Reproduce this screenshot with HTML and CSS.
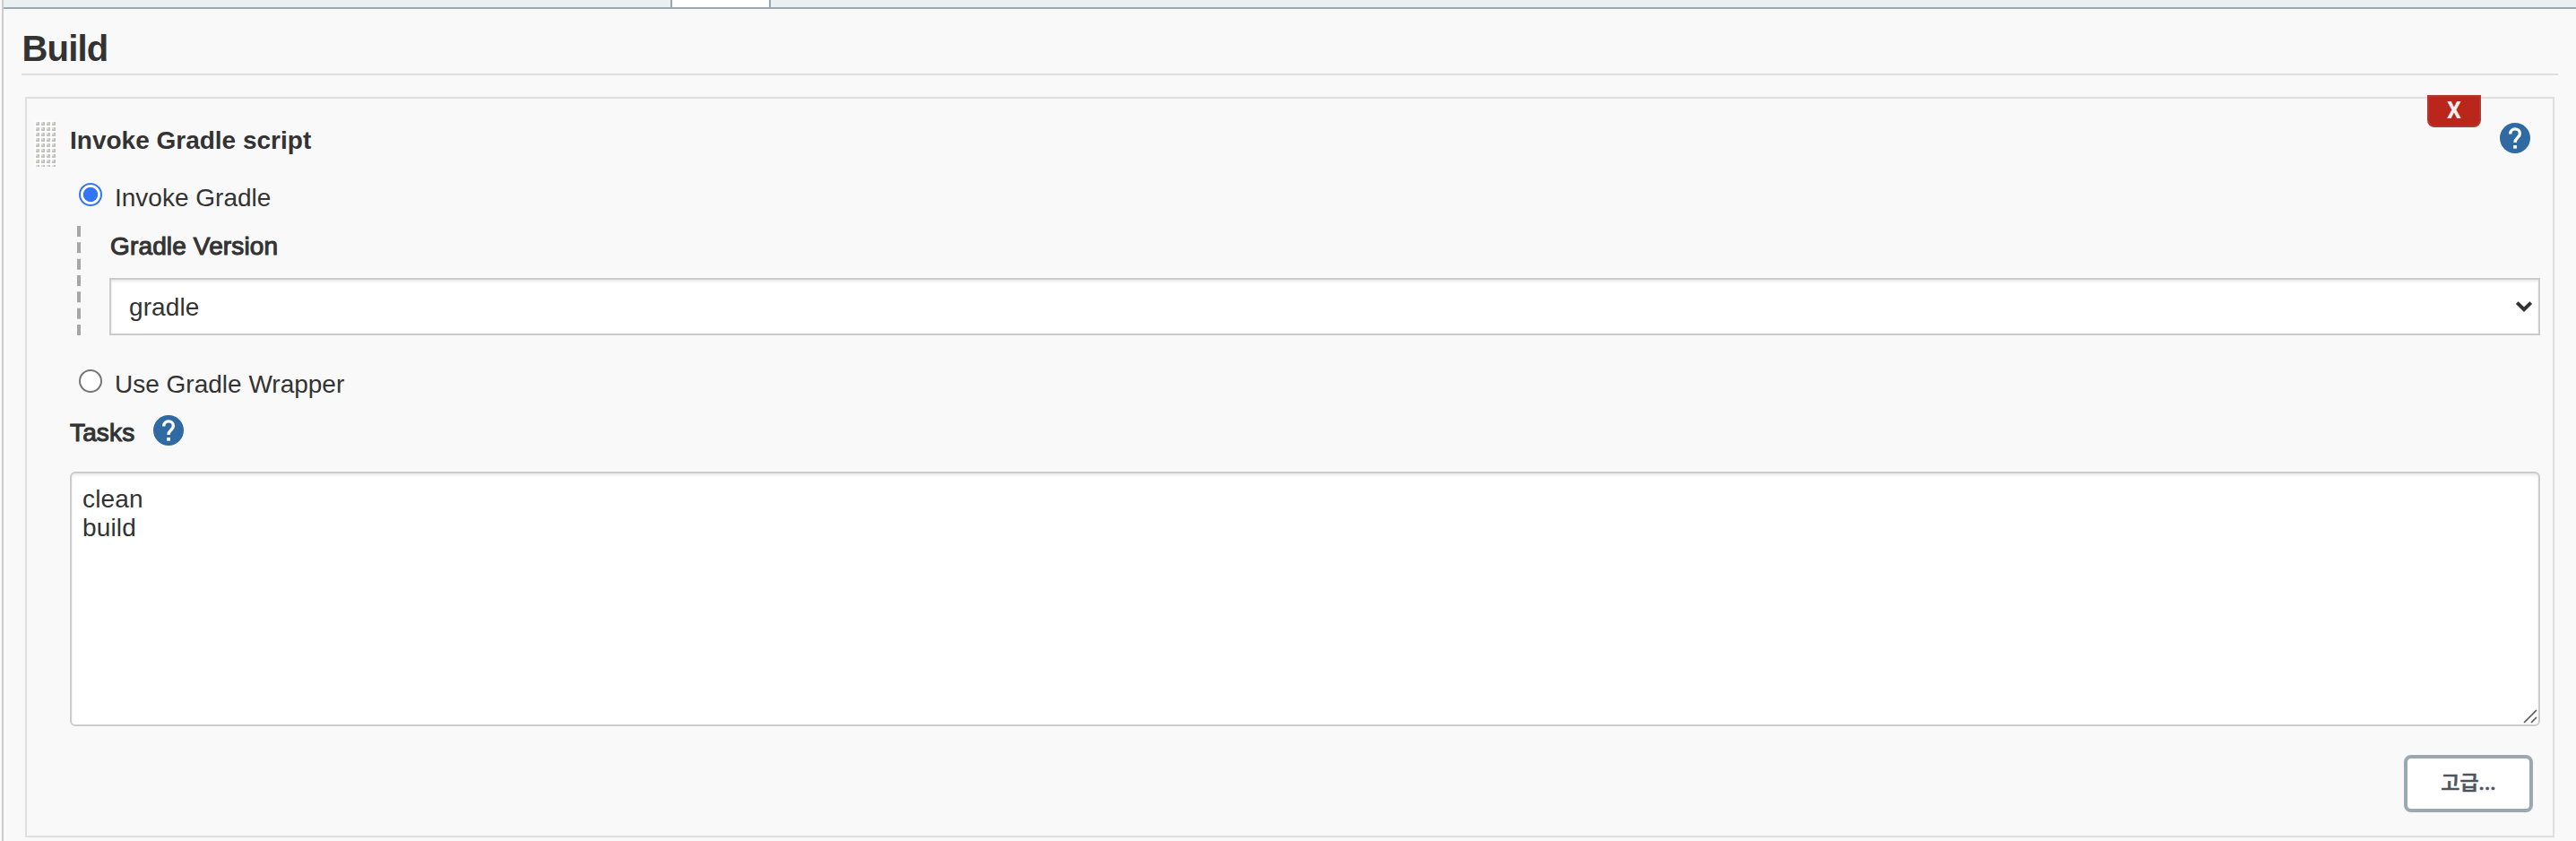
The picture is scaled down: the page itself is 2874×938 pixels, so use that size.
FILE: index.html
```
<!DOCTYPE html>
<html lang="ko">
<head>
<meta charset="utf-8">
<title>Build</title>
<link rel="stylesheet" href="styles.css">
</head>
<body>
<svg class="defs" width="0" height="0">
  <symbol id="help" viewBox="0 0 34 34">
    <circle cx="17" cy="17" r="17" fill="#2f6aa3"/>
    <path d="M11.7 12.4C11.7 9 14 6.9 17 6.9s5.4 2.2 5.4 5.1c0 4.4-5.4 4.6-5.4 9.9" fill="none" stroke="#fff" stroke-width="3.4"/>
    <rect x="15.2" y="25" width="3.7" height="3.7" fill="#fff"/>
  </symbol>
</svg>
<div class="page">
  <div class="tab-bar"><div class="tab"></div></div>
  <main class="content">
    <h1 class="section-title">Build</h1>
    <section class="step">
      <button class="delete">X</button>
      <header class="step-header">
        <svg class="grip" width="24" height="52" viewBox="0 0 24 52">
          <defs>
            <pattern id="dots" width="6" height="6" patternUnits="userSpaceOnUse">
              <rect width="6" height="6" fill="#fcfcfc"/>
              <rect x="2" y="2" width="4" height="4" fill="#dededc"/>
              <path d="M6 2V6H2V4H4V2z" fill="#c2c2bf"/>
            </pattern>
          </defs>
          <rect width="24" height="52" fill="url(#dots)"/>
        </svg>
        <h2 class="step-title">Invoke Gradle script</h2>
        <svg class="help"><use href="#help"/></svg>
      </header>
      <div class="fields">
        <label class="option"><span class="radio checked"></span>Invoke Gradle</label>
        <div class="nested">
          <svg class="dashes" width="4" height="122"><path d="M2 0V122" stroke="#a6a6a6" stroke-width="4" stroke-dasharray="12 6.333"/></svg>
          <div class="nested-body">
            <div class="label">Gradle Version</div>
            <div class="select"><span>gradle</span>
              <svg width="20" height="14" viewBox="0 0 20 14"><path d="M2.3 2.6L10 10.2L17.7 2.6" fill="none" stroke="#333" stroke-width="4"/></svg>
            </div>
          </div>
        </div>
        <label class="option wrapper"><span class="radio"></span>Use Gradle Wrapper</label>
        <div class="tasks-row"><span class="label">Tasks</span><svg class="help"><use href="#help"/></svg></div>
        <div class="textarea"><div class="lines">clean
build</div>
          <svg class="resize" width="16" height="16" viewBox="0 0 16 16"><path d="M1 15L15 1M9 15L15 9" fill="none" stroke="#555" stroke-width="1.6"/></svg>
        </div>
        <div class="actions"><button class="advanced">고급...</button></div>
      </div>
    </section>
  </main>
</div>
</body>
</html>
```

FILE: styles.css
```
* { box-sizing: border-box; }

body {
  margin: 0;
  background: #f9f9f9;
  color: #333;
  font: 28px/32px "Liberation Sans", Arial, "Noto Sans CJK KR", sans-serif;
}

.defs { position: absolute; }

.page {
  height: 938px;
  margin-left: 2px;
  border-left: 2px solid #ccc;
  overflow: hidden;
}

.tab-bar {
  height: 10px;
  padding-left: 744px;
  background: #eaeff2;
  border-bottom: 2px solid #9aa8b0;
}

.tab {
  width: 112px;
  height: 8px;
  background: #fff;
  border: solid #9aa8b0;
  border-width: 0 2px;
}

.content { padding: 20px 20px 0; }

.section-title {
  height: 54px;
  margin: 0 0 24px;
  border-bottom: 2px solid #dfdfdf;
  font-size: 40px;
  line-height: 48px;
  letter-spacing: -0.8px;
  text-indent: 0.5px;
}

.step {
  position: relative;
  height: 826px;
  margin: 0 4px;
  padding: 24px 14px 0 8px;
  border: 2px solid #dfdfdf;
}

.delete {
  position: absolute;
  top: -4px;
  right: 80px;
  width: 60px;
  height: 36px;
  padding: 0;
  border: 2px solid #b03a30;
  border-radius: 0 0 8px 8px;
  background: #ba261b;
  color: #f5efef;
  font: bold 25px/32px Roboto, sans-serif;
}

.step-header {
  display: flex;
  align-items: flex-start;
  height: 66px;
}

.step-title {
  flex: 1;
  margin: 7px 0 0 16px;
  font-size: 28px;
  line-height: 32px;
}

.help { display: block; width: 34px; height: 34px; }

.step-header .help { margin: 3px 11px 0 0; }

.fields { margin-left: 40px; }

.option {
  display: flex;
  align-items: flex-start;
  height: 52px;
  padding: 4px 0 0 10px;
  line-height: 34px;
}

.radio {
  width: 26px;
  height: 26px;
  margin: 0 14px 0 0;
  border: 2px solid #767676;
  border-radius: 50%;
  background: #fff;
}

.checked {
  border-color: #3275f6;
  background: radial-gradient(circle, #3275f6 7.7px, #fff 8.5px);
}

.nested {
  display: flex;
  gap: 32px;
  padding-left: 8px;
}

.nested-body { flex: 1; }

.label {
  letter-spacing: 0.15px;
  -webkit-text-stroke: 1.1px #333;
}

.nested .label { padding: 7px 0 19px 1px; }

.select {
  display: flex;
  align-items: center;
  justify-content: space-between;
  height: 64px;
  padding: 0 6px 0 20px;
  border: 2px solid #ccc;
  background: #fff;
  box-shadow: inset 0 2px 3px rgba(0, 0, 0, 0.09);
}

.select span { padding-top: 2px; letter-spacing: 0.1px; }

.wrapper { margin-top: 34px; }

.tasks-row {
  display: flex;
  gap: 20px;
  height: 66px;
  padding-top: 3px;
}

.tasks-row .label { width: 73px; padding-top: 4px; }

.textarea {
  position: relative;
  height: 284px;
  padding: 13px 12px 12px;
  border: 2px solid #ccc;
  border-radius: 6px;
  background: #fff;
  box-shadow: inset 0 2px 3px rgba(0, 0, 0, 0.09);
}

.lines { white-space: pre-line; letter-spacing: 0.15px; }

.resize { position: absolute; right: 1px; bottom: 1px; }

.actions {
  display: flex;
  justify-content: flex-end;
  padding: 32px 8px 0 0;
}

.advanced {
  width: 144px;
  height: 64px;
  padding: 0;
  border: 4px solid #9aa8b0;
  border-radius: 8px;
  background: #fff;
  color: #4d545d;
  font: 500 23px/52px Roboto, "Noto Sans CJK KR", sans-serif;
  -webkit-text-stroke: 0.6px #4d545d;
}
```
